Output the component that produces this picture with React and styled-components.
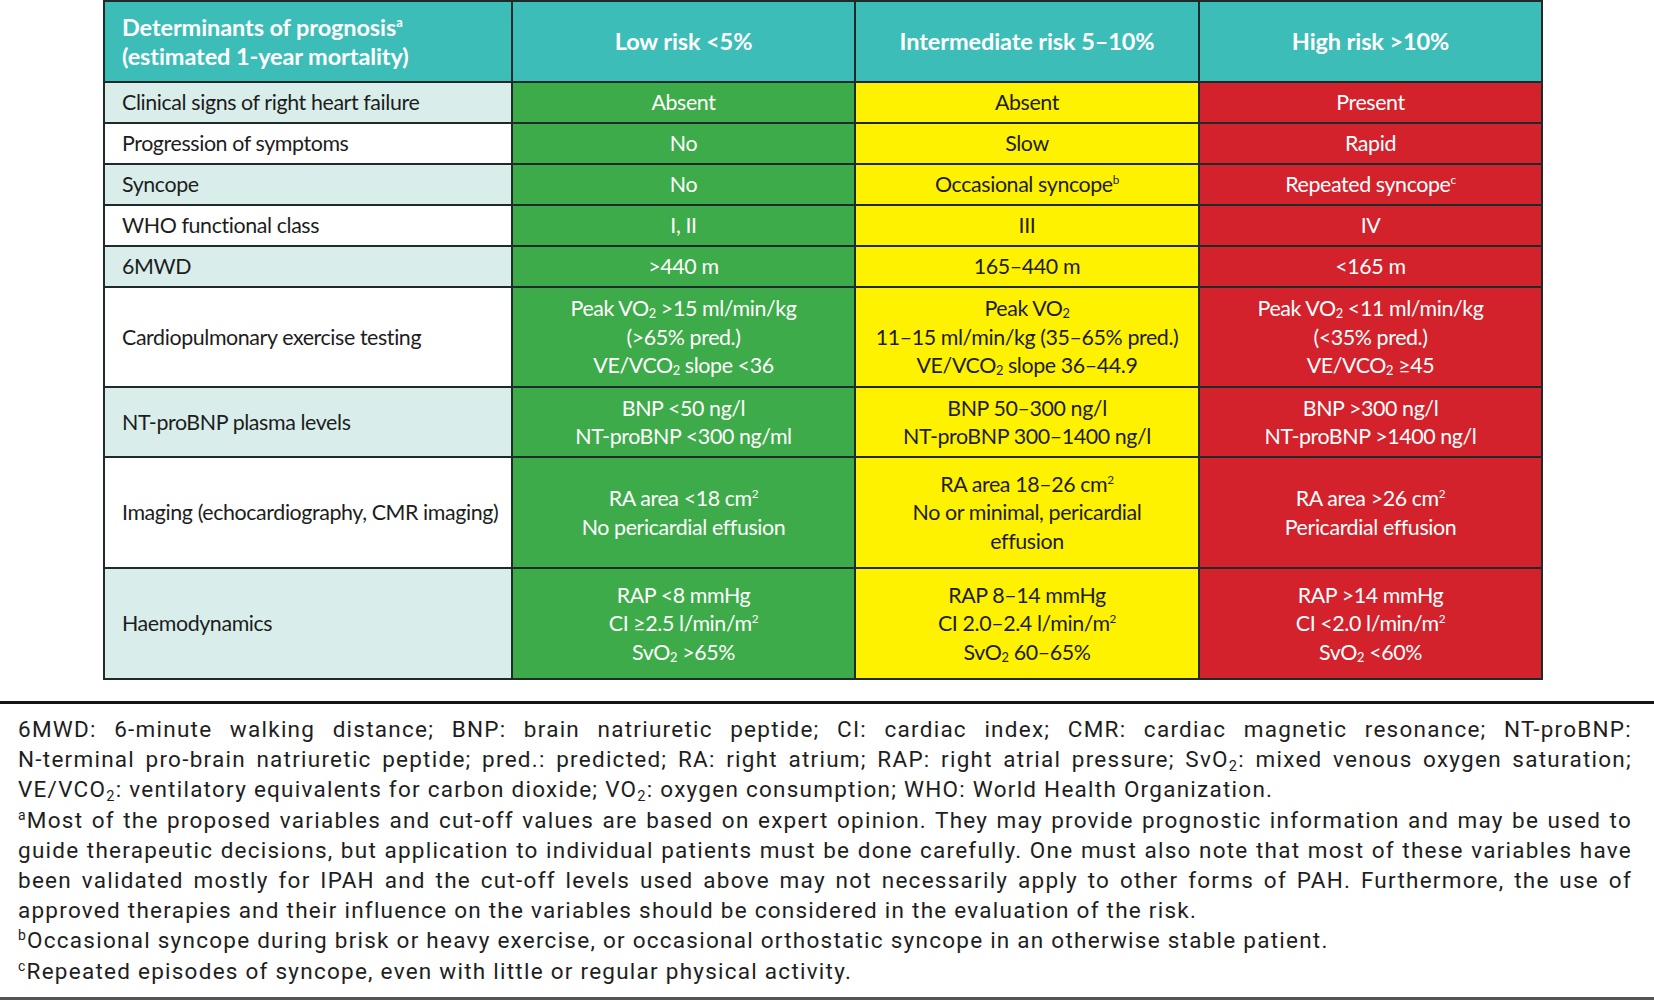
import React from "react";
import styled, { createGlobalStyle } from "styled-components";

const GlobalStyle = createGlobalStyle`
  html, body {
    margin: 0;
    padding: 0;
    background: #ffffff;
  }
  body {
    width: 1654px;
    height: 1002px;
    overflow: hidden;
  }
`;

const tones = {
  head: { bg: "#3dbdb8", fg: "#ffffff" },
  tint: { bg: "#d9eeeb", fg: "#1d1d1d" },
  plain: { bg: "#ffffff", fg: "#1d1d1d" },
  low: { bg: "#3dab49", fg: "#ffffff" },
  mid: { bg: "#fff200", fg: "#1d1d1d" },
  high: { bg: "#d3222b", fg: "#ffffff" },
};

const Page = styled.div`
  display: flex;
  flex-direction: column;
`;

const TableWrap = styled.div`
  padding-left: 103px;
`;

const Table = styled.div`
  display: grid;
  width: 1440px;
  box-sizing: border-box;
  grid-template-columns: 406px 341px 342px 341px;
  grid-template-rows: 79px repeat(5, 39px) 98px 68px 109px 109px;
  gap: 2px;
  padding: 2px;
  background: #1f2a2a;
  font-family: Lato, "Open Sans", sans-serif;
  font-size: 21.4px;
  letter-spacing: -0.4px;
`;

const Cell = styled.div`
  display: flex;
  flex-direction: column;
  justify-content: center;
  align-items: ${(p) => (p.$left ? "flex-start" : "center")};
  text-align: ${(p) => (p.$left ? "left" : "center")};
  padding: ${(p) => (p.$left ? "0 0 0 17px" : "0 8px")};
  background: ${(p) => tones[p.$tone].bg};
  color: ${(p) => tones[p.$tone].fg};
  line-height: 28.5px;
`;

const HeadCell = styled(Cell)`
  font-weight: 700;
  font-size: 23.5px;
  letter-spacing: -0.1px;
  line-height: 29px;
`;

const Sub = styled.sub`
  font-size: 0.6em;
  vertical-align: -0.15em;
  line-height: 0;
`;

const Sup = styled.sup`
  font-size: 0.55em;
  vertical-align: 0.7em;
  line-height: 0;
`;

const Footer = styled.div`
  margin-top: 21px;
  border-top: 3px solid #151515;
  border-bottom: 3px solid #555;
  padding: 10px 22px 11px 18px;
  font-family: Roboto, "Liberation Sans", sans-serif;
  font-size: 22.5px;
  letter-spacing: 1.25px;
  line-height: 30.2px;
  color: #1e1e1e;
`;

const Line = styled.div`
  white-space: nowrap;
  text-align: ${(p) => (p.$justify ? "justify" : "left")};
  text-align-last: ${(p) => (p.$justify ? "justify" : "left")};
`;

const FootSub = styled.sub`
  font-size: 0.65em;
  vertical-align: -0.25em;
  line-height: 0;
`;

const FootSup = styled.sup`
  font-size: 0.62em;
  vertical-align: 0.55em;
  line-height: 0;
`;

const V2 = () => (
  <>
    VO<Sub>2</Sub>
  </>
);
const VE = () => (
  <>
    VE/VCO<Sub>2</Sub>
  </>
);

const rows = [
  {
    label: "Clinical signs of right heart failure",
    tone: "tint",
    cells: [["Absent"], ["Absent"], ["Present"]],
  },
  {
    label: "Progression of symptoms",
    tone: "plain",
    cells: [["No"], ["Slow"], ["Rapid"]],
  },
  {
    label: "Syncope",
    tone: "tint",
    cells: [
      ["No"],
      [<>Occasional syncope<Sup>b</Sup></>],
      [<>Repeated syncope<Sup>c</Sup></>],
    ],
  },
  {
    label: "WHO functional class",
    tone: "plain",
    cells: [["I, II"], ["III"], ["IV"]],
  },
  {
    label: "6MWD",
    tone: "tint",
    cells: [[">440 m"], ["165–440 m"], ["<165 m"]],
  },
  {
    label: "Cardiopulmonary exercise testing",
    tone: "plain",
    cells: [
      [
        <>Peak <V2 /> &gt;15 ml/min/kg</>,
        "(>65% pred.)",
        <><VE /> slope &lt;36</>,
      ],
      [
        <>Peak <V2 /></>,
        "11–15 ml/min/kg (35–65% pred.)",
        <><VE /> slope 36–44.9</>,
      ],
      [
        <>Peak <V2 /> &lt;11 ml/min/kg</>,
        "(<35% pred.)",
        <><VE /> ≥45</>,
      ],
    ],
  },
  {
    label: "NT-proBNP plasma levels",
    tone: "tint",
    cells: [
      ["BNP <50 ng/l", "NT-proBNP <300 ng/ml"],
      ["BNP 50–300 ng/l", "NT-proBNP 300–1400 ng/l"],
      ["BNP >300 ng/l", "NT-proBNP >1400 ng/l"],
    ],
  },
  {
    label: "Imaging (echocardiography, CMR imaging)",
    tone: "plain",
    cells: [
      [<>RA area &lt;18 cm<Sup>2</Sup></>, "No pericardial effusion"],
      [
        <>RA area 18–26 cm<Sup>2</Sup></>,
        "No or minimal, pericardial",
        "effusion",
      ],
      [<>RA area &gt;26 cm<Sup>2</Sup></>, "Pericardial effusion"],
    ],
  },
  {
    label: "Haemodynamics",
    tone: "tint",
    cells: [
      [
        "RAP <8 mmHg",
        <>CI ≥2.5 l/min/m<Sup>2</Sup></>,
        <>SvO<Sub>2</Sub> &gt;65%</>,
      ],
      [
        "RAP 8–14 mmHg",
        <>CI 2.0–2.4 l/min/m<Sup>2</Sup></>,
        <>SvO<Sub>2</Sub> 60–65%</>,
      ],
      [
        "RAP >14 mmHg",
        <>CI &lt;2.0 l/min/m<Sup>2</Sup></>,
        <>SvO<Sub>2</Sub> &lt;60%</>,
      ],
    ],
  },
];

const riskTones = ["low", "mid", "high"];

export default function App() {
  return (
    <Page>
      <GlobalStyle />
      <TableWrap>
        <Table>
          <HeadCell $tone="head" $left>
            <div>
              Determinants of prognosis<Sup>a</Sup>
            </div>
            <div>(estimated 1-year mortality)</div>
          </HeadCell>
          <HeadCell $tone="head">Low risk &lt;5%</HeadCell>
          <HeadCell $tone="head">Intermediate risk 5–10%</HeadCell>
          <HeadCell $tone="head">High risk &gt;10%</HeadCell>

          {rows.map((row) => (
            <React.Fragment key={row.label}>
              <Cell $tone={row.tone} $left>
                {row.label}
              </Cell>
              {row.cells.map((lines, i) => (
                <Cell key={i} $tone={riskTones[i]}>
                  {lines.map((l, j) => (
                    <div key={j}>{l}</div>
                  ))}
                </Cell>
              ))}
            </React.Fragment>
          ))}
        </Table>
      </TableWrap>

      <Footer>
        <Line $justify>
          6MWD: 6-minute walking distance; BNP: brain natriuretic peptide; CI:
          cardiac index; CMR: cardiac magnetic resonance; NT-proBNP:
        </Line>
        <Line $justify>
          N-terminal pro-brain natriuretic peptide; pred.: predicted; RA: right
          atrium; RAP: right atrial pressure; SvO<FootSub>2</FootSub>: mixed
          venous oxygen saturation;
        </Line>
        <Line>
          VE/VCO<FootSub>2</FootSub>: ventilatory equivalents for carbon
          dioxide; VO<FootSub>2</FootSub>: oxygen consumption; WHO: World Health
          Organization.
        </Line>
        <Line $justify>
          <FootSup>a</FootSup>Most of the proposed variables and cut-off values
          are based on expert opinion. They may provide prognostic information
          and may be used to
        </Line>
        <Line $justify>
          guide therapeutic decisions, but application to individual patients
          must be done carefully. One must also note that most of these
          variables have
        </Line>
        <Line $justify>
          been validated mostly for IPAH and the cut-off levels used above may
          not necessarily apply to other forms of PAH. Furthermore, the use of
        </Line>
        <Line>
          approved therapies and their influence on the variables should be
          considered in the evaluation of the risk.
        </Line>
        <Line>
          <FootSup>b</FootSup>Occasional syncope during brisk or heavy exercise,
          or occasional orthostatic syncope in an otherwise stable patient.
        </Line>
        <Line>
          <FootSup>c</FootSup>Repeated episodes of syncope, even with little or
          regular physical activity.
        </Line>
      </Footer>
    </Page>
  );
}
